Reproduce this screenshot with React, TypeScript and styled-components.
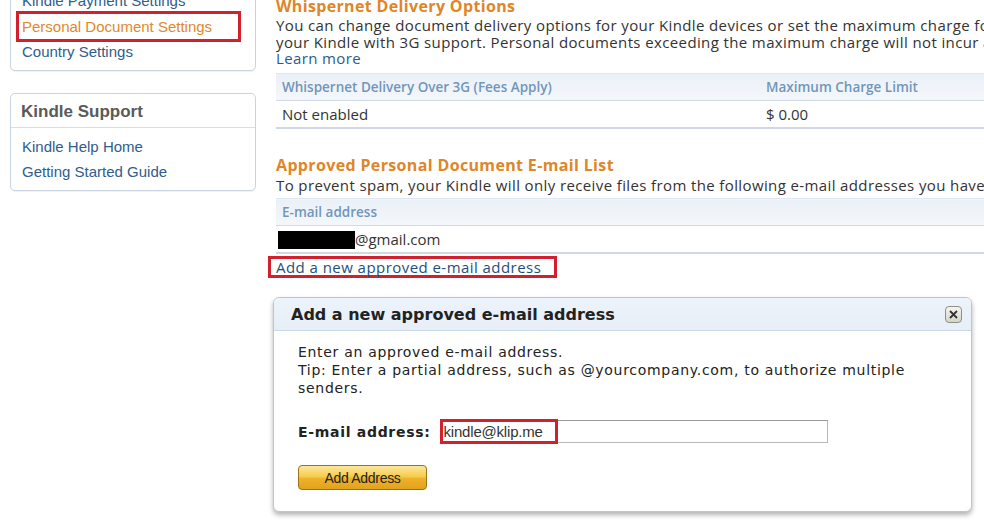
import styled, { createGlobalStyle } from "styled-components";

const GlobalStyle = createGlobalStyle`
  html, body {
    margin: 0;
    padding: 0;
    background: #fff;
    overflow: hidden;
  }
  body {
    font-family: "Liberation Sans", Arial, sans-serif;
    color: #333;
  }
`;

const Page = styled.div`
  display: flex;
  align-items: flex-start;
  gap: 20px;
  width: 984px;
  height: 522px;
  padding-left: 10px;
  box-sizing: border-box;
  overflow: hidden;
`;

/* ---------- sidebar ---------- */

const Sidebar = styled.aside`
  flex: 0 0 246px;
  display: flex;
  flex-direction: column;
  gap: 22px;
  margin-top: -19px;
`;

const SideBox = styled.div`
  border: 1px solid #c9d4df;
  border-radius: 5px;
  box-shadow: 0 1px 1px rgba(0, 0, 0, 0.06);
  padding: 6px 0 5px;
`;

const SideTitle = styled.div`
  margin-top: -6px;
  padding: 0 10px;
  height: 33px;
  line-height: 35px;
  font-size: 17px;
  font-weight: bold;
  color: #5a5a5a;
  border-bottom: 1px solid #d6dee7;
  margin-bottom: 6px;
`;

const SideLink = styled.a<{ $active?: boolean }>`
  display: block;
  height: 25.5px;
  line-height: 25.5px;
  padding-left: 11px;
  font-size: 15px;
  text-decoration: none;
  color: ${(p) => (p.$active ? "#e0892b" : "#2f5d8c")};
  ${(p) =>
    p.$active &&
    `
    margin: 0 17px 0 8px;
    padding-left: 3px;
    outline: 3px solid #d3202f;
  `}
`;

/* ---------- main column ---------- */

const Main = styled.main`
  flex: 0 0 820px;
  margin-top: -3px;
  font-family: "Open Sans", "Noto Sans", sans-serif;
  font-size: 15px;
`;

const Heading = styled.h2<{ $gap?: number }>`
  margin: ${(p) => p.$gap ?? 0}px 0 0;
  font-size: 16px;
  line-height: 18px;
  letter-spacing: 0.35px;
  font-weight: bold;
  color: #de8628;
`;

const Intro = styled.p<{ $gap?: number }>`
  margin: ${(p) => p.$gap ?? 2}px 0 0;
  line-height: 16.5px;
  letter-spacing: 0.38px;
  white-space: nowrap;
  color: #333;
`;

const TextLink = styled.a`
  color: #2b5c8a;
  text-decoration: none;
`;

const Table = styled.table<{ $gap: number }>`
  margin-top: ${(p) => p.$gap}px;
  width: 100%;
  border-collapse: collapse;
`;

const HeadCell = styled.th<{ $width?: number }>`
  width: ${(p) => (p.$width ? `${p.$width}px` : "auto")};
  height: 26px;
  padding: 0 6px;
  text-align: left;
  font-size: 13.5px;
  font-weight: 600;
  color: #7196bb;
  background: linear-gradient(#eaf0f7, #f4f7fb);
  border-top: 1px solid #dfe7f0;
  border-bottom: 1px solid #d2dce7;
`;

const Cell = styled.td`
  height: 26px;
  padding: 0 6px;
  font-size: 15px;
  color: #333;
  border-bottom: 2px solid #cfd9e4;
`;

const Redacted = styled.span`
  display: inline-block;
  width: 77px;
  height: 18px;
  vertical-align: -4px;
  margin-left: -4px;
  background: #000;
`;

const Highlight = styled.span`
  display: inline-block;
  margin: 2px 0 0 -8px;
  padding: 0 13px 0 5px;
  height: 16px;
  line-height: 16px;
  border: 3px solid #d3202f;
`;

const AddLink = styled.a`
  color: #1f4f80;
  font-size: 15px;
  letter-spacing: 0.45px;
  text-decoration: none;
`;

/* ---------- dialog ---------- */

const Dialog = styled.section`
  margin: 19px 0 0 -3px;
  width: 699px;
  box-sizing: border-box;
  border: 1px solid #b7c7d8;
  border-radius: 6px;
  background: #fff;
  box-shadow: 0 3px 5px rgba(0, 0, 0, 0.3);
  font-family: "DejaVu Sans", Verdana, sans-serif;
  overflow: hidden;
`;

const DialogHeader = styled.header`
  display: flex;
  align-items: center;
  justify-content: space-between;
  height: 32px;
  padding: 0 9px 0 17px;
  background: linear-gradient(#edf3fa, #e6eef7);
  border-bottom: 1px solid #cbd8e6;
`;

const DialogTitle = styled.h3`
  margin: 0;
  font-size: 16px;
  font-weight: bold;
  color: #222;
`;

const CloseButton = styled.button`
  display: flex;
  align-items: center;
  justify-content: center;
  width: 17px;
  height: 17px;
  padding: 0;
  border: 1px solid #8f8f88;
  border-radius: 4px;
  background: linear-gradient(#f6f6f0, #d4d4c8);
`;

const DialogBody = styled.div`
  padding: 12px 24px 21px;
  font-size: 14px;
  letter-spacing: 0.7px;
  color: #222;
`;

const Instructions = styled.p`
  margin: 0;
  line-height: 18px;
`;

const FormRow = styled.div`
  display: flex;
  align-items: center;
  gap: 9px;
  margin-top: 23px;
`;

const Label = styled.label`
  font-size: 14px;
  font-weight: bold;
  color: #222;
`;

const InputWrap = styled.div`
  position: relative;
`;

const EmailInput = styled.input`
  display: block;
  width: 388px;
  height: 23px;
  box-sizing: border-box;
  padding: 0 3px;
  border: 1px solid #b9b9b9;
  border-top-color: #999;
  font-family: "Liberation Sans", Arial, sans-serif;
  font-size: 15px;
  letter-spacing: -0.2px;
  color: #333;
`;

const InputMark = styled.span`
  position: absolute;
  left: 0;
  top: -1px;
  width: 118px;
  height: 25px;
  box-sizing: border-box;
  border: 3px solid #d3202f;
  pointer-events: none;
`;

const GoldButton = styled.button`
  margin-top: 22px;
  width: 129px;
  height: 25px;
  border: 1px solid #9c7418;
  border-radius: 4px;
  background: linear-gradient(#fde79e, #f7cc4e 45%, #eeb22a 55%, #e3a11c);
  font-family: "Liberation Sans", Arial, sans-serif;
  font-size: 14px;
  color: #222;
  letter-spacing: -0.3px;
`;

function App() {
  return (
    <>
      <GlobalStyle />
      <Page>
        <Sidebar>
          <SideBox>
            <SideLink href="#">Kindle Payment Settings</SideLink>
            <SideLink href="#" $active>
              Personal Document Settings
            </SideLink>
            <SideLink href="#">Country Settings</SideLink>
          </SideBox>

          <SideBox>
            <SideTitle>Kindle Support</SideTitle>
            <SideLink href="#">Kindle Help Home</SideLink>
            <SideLink href="#">Getting Started Guide</SideLink>
          </SideBox>
        </Sidebar>

        <Main>
          <Heading>Whispernet Delivery Options</Heading>
          <Intro>
            You can change document delivery options for your Kindle devices or set the
            maximum charge for Whispernet delivery over 3G.
            <br />
            your Kindle with 3G support. Personal documents exceeding the maximum charge will
            not incur a fee.
            <br />
            <TextLink href="#">Learn more</TextLink>
          </Intro>

          <Table $gap={6}>
            <thead>
              <tr>
                <HeadCell $width={472}>Whispernet Delivery Over 3G (Fees Apply)</HeadCell>
                <HeadCell>Maximum Charge Limit</HeadCell>
              </tr>
            </thead>
            <tbody>
              <tr>
                <Cell>Not enabled</Cell>
                <Cell>$ 0.00</Cell>
              </tr>
            </tbody>
          </Table>

          <Heading $gap={27}>Approved Personal Document E-mail List</Heading>
          <Intro $gap={3}>
            To prevent spam, your Kindle will only receive files from the following e-mail
            addresses you have approved.
          </Intro>

          <Table $gap={5}>
            <thead>
              <tr>
                <HeadCell>E-mail address</HeadCell>
              </tr>
            </thead>
            <tbody>
              <tr>
                <Cell>
                  <Redacted />
                  @gmail.com
                </Cell>
              </tr>
            </tbody>
          </Table>

          <Highlight>
            <AddLink href="#">Add a new approved e-mail address</AddLink>
          </Highlight>

          <Dialog>
            <DialogHeader>
              <DialogTitle>Add a new approved e-mail address</DialogTitle>
              <CloseButton aria-label="close">
                <svg width="9" height="9" viewBox="0 0 9 9" aria-hidden="true">
                  <path d="M1 1 L8 8 M8 1 L1 8" stroke="#333" strokeWidth="1.8" />
                </svg>
              </CloseButton>
            </DialogHeader>
            <DialogBody>
              <Instructions>
                Enter an approved e-mail address.
                <br />
                Tip: Enter a partial address, such as @yourcompany.com, to authorize multiple
                <br />
                senders.
              </Instructions>
              <FormRow>
                <Label htmlFor="email">E-mail address:</Label>
                <InputWrap>
                  <EmailInput id="email" defaultValue="kindle@klip.me" />
                  <InputMark />
                </InputWrap>
              </FormRow>
              <GoldButton>Add Address</GoldButton>
            </DialogBody>
          </Dialog>
        </Main>
      </Page>
    </>
  );
}

export default App;
